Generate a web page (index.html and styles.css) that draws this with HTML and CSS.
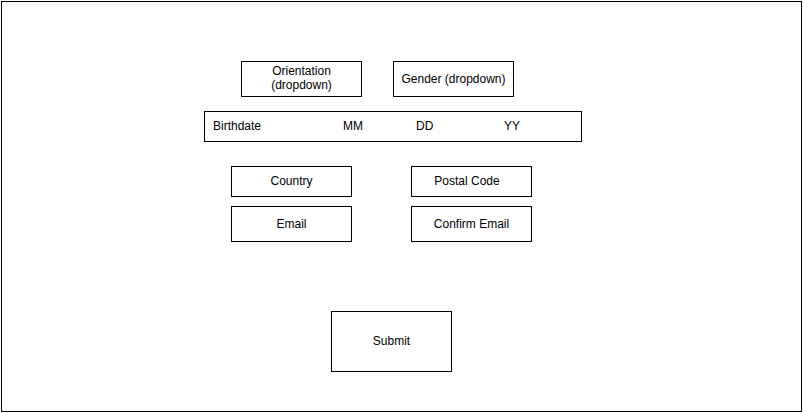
FILE: index.html
```html
<!DOCTYPE html>
<html lang="en">

<head>
   <meta charset="UTF-8">
   <meta name="viewport" content="width=device-width, initial-scale=1.0">
   <title>Signup form wireframe</title>
   <link rel="stylesheet" href="styles.css">
</head>

<body>
   <div class="frame">
      <div class="row row--top">
         <div class="field field--tall field--lift">Orientation<br>(dropdown)</div>
         <div class="field field--tall">Gender (dropdown)</div>
      </div>

      <div class="birthdate">
         <span class="birthdate__label">Birthdate</span>
         <span class="birthdate__mm">MM</span>
         <span class="birthdate__dd">DD</span>
         <span>YY</span>
      </div>

      <div class="row row--place">
         <div class="field">Country</div>
         <div class="field field--postal">Postal Code</div>
      </div>

      <div class="row row--email">
         <div class="field field--tall">Email</div>
         <div class="field field--tall">Confirm Email</div>
      </div>

      <div class="submit">Submit</div>
   </div>
</body>

</html>
```

FILE: styles.css
```css
*,
*::before,
*::after {
   box-sizing: border-box;
}

html,
body {
   margin: 0;
   padding: 0;
   background-color: #fff;
   font-family: "Liberation Sans", Arial, sans-serif;
   font-size: 12px;
   color: #000;
}

.frame {
   margin: 1px;
   width: 801px;
   height: 411px;
   border: 1px solid #000;
   display: flex;
   flex-direction: column;
   align-items: flex-start;
}

.row {
   display: flex;
}

.row--top {
   margin: 59px 0 0 239px;
   gap: 31px;
}

.row--place {
   margin: 24px 0 0 229px;
   gap: 59px;
}

.row--email {
   margin: 9px 0 0 229px;
   gap: 59px;
}

.field {
   width: 121px;
   height: 31px;
   border: 1px solid #000;
   padding-bottom: 2px;
   display: flex;
   align-items: center;
   justify-content: center;
   text-align: center;
   line-height: 14px;
}

.field--tall {
   height: 36px;
   padding-bottom: 0;
}

/* two-line label sits a touch higher */
.field--lift {
   padding-bottom: 2px;
}

.field--postal {
   padding-right: 9px;
}

.birthdate {
   margin: 14px 0 0 202px;
   width: 378px;
   height: 31px;
   border: 1px solid #000;
   padding: 0 0 2px 8px;
   display: flex;
   align-items: center;
}

.birthdate__label {
   width: 130px;
}

.birthdate__mm {
   width: 73px;
}

.birthdate__dd {
   width: 88px;
}

.submit {
   margin: 69px 0 0 329px;
   width: 121px;
   height: 61px;
   border: 1px solid #000;
   padding-bottom: 2px;
   display: flex;
   align-items: center;
   justify-content: center;
}
```
